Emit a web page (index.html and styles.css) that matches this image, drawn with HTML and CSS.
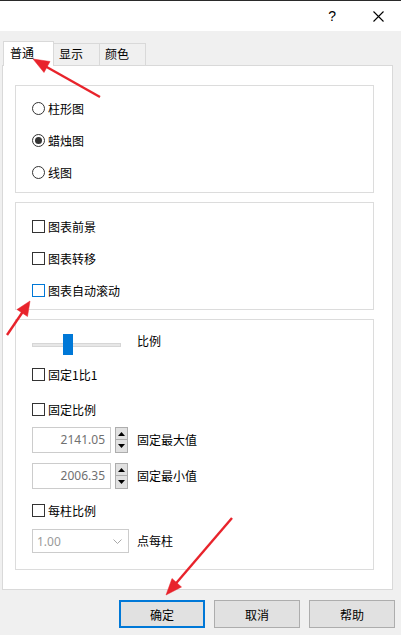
FILE: index.html
```html
<!DOCTYPE html>
<html lang="zh-CN">
<head>
<meta charset="utf-8">
<link rel="stylesheet" href="styles.css">
</head>
<body>
<div class="topline"></div>
<div class="titlebar">
  <span class="help">?</span>
  <svg class="close" width="11" height="11" viewBox="0 0 11 11"><path d="M0.5 0.5L10.5 10.5M10.5 0.5L0.5 10.5" stroke="#000" stroke-width="1.1" fill="none"/></svg>
</div>
<div class="content">
  <div class="tabs">
    <div class="tab active">普通</div>
    <div class="tab">显示</div>
    <div class="tab">颜色</div>
  </div>
  <div class="panel">
    <div class="group g1">
      <div class="row"><span class="radio"></span><span>柱形图</span></div>
      <div class="row"><span class="radio checked"></span><span>蜡烛图</span></div>
      <div class="row"><span class="radio"></span><span>线图</span></div>
    </div>
    <div class="group g2">
      <div class="row"><span class="check"></span><span>图表前景</span></div>
      <div class="row"><span class="check"></span><span>图表转移</span></div>
      <div class="row"><span class="check hover"></span><span>图表自动滚动</span></div>
    </div>
    <div class="group g3">
      <div class="line slider-line">
        <div class="ctrl">
          <div class="slider"><div class="track"></div><div class="thumb"></div></div>
        </div>
        <span class="lbl top">比例</span>
      </div>
      <div class="row r-fix11"><span class="check"></span><span>固定1比1</span></div>
      <div class="row r-fixratio"><span class="check"></span><span>固定比例</span></div>
      <div class="line spin-line s1">
        <div class="ctrl">
          <div class="spin">
            <div class="input">2141.05</div>
            <div class="spinbtns">
              <div class="sb"><svg width="7" height="4" viewBox="0 0 7 4"><path d="M3.5 0L7 4H0Z" fill="#000"/></svg></div>
              <div class="sb"><svg width="7" height="4" viewBox="0 0 7 4"><path d="M0 0H7L3.5 4Z" fill="#000"/></svg></div>
            </div>
          </div>
        </div>
        <span class="lbl">固定最大值</span>
      </div>
      <div class="line spin-line s2">
        <div class="ctrl">
          <div class="spin">
            <div class="input">2006.35</div>
            <div class="spinbtns">
              <div class="sb"><svg width="7" height="4" viewBox="0 0 7 4"><path d="M3.5 0L7 4H0Z" fill="#000"/></svg></div>
              <div class="sb"><svg width="7" height="4" viewBox="0 0 7 4"><path d="M0 0H7L3.5 4Z" fill="#000"/></svg></div>
            </div>
          </div>
        </div>
        <span class="lbl">固定最小值</span>
      </div>
      <div class="row r-perbar"><span class="check"></span><span>每柱比例</span></div>
      <div class="line combo-line">
        <div class="ctrl">
          <div class="combo"><span>1.00</span><svg width="9" height="5" viewBox="0 0 9 5"><path d="M0.5 0.5L4.5 4.5L8.5 0.5" stroke="#a8a8a8" fill="none" stroke-width="1"/></svg></div>
        </div>
        <span class="lbl">点每柱</span>
      </div>
    </div>
  </div>
  <div class="buttons">
    <div class="btn default">确定</div>
    <div class="btn">取消</div>
    <div class="btn">帮助</div>
  </div>
</div>
<svg class="arrows" width="401" height="635" viewBox="0 0 401 635">
  <g fill="#e8232b" stroke="#e8232b">
    <line x1="100" y1="97" x2="44" y2="65.5" stroke-width="2.4"/>
    <polygon points="33,59 50,61.5 44,72.5" stroke-width="0.5"/>
    <line x1="7" y1="335" x2="24" y2="310" stroke-width="2.4"/>
    <polygon points="30,301 27.5,316.5 17,309.5" stroke-width="0.5"/>
    <line x1="232" y1="518" x2="175" y2="584.5" stroke-width="2.4"/>
    <polygon points="166,595 181.5,587 172,578.5" stroke-width="0.5"/>
  </g>
</svg>
</body>
</html>
```
FILE: styles.css
```css
* { box-sizing: border-box; }
html, body { margin: 0; padding: 0; }
body {
  width: 401px;
  height: 635px;
  background: #f0f0f0;
  font-family: "Noto Sans CJK SC", "Microsoft YaHei", sans-serif;
  font-size: 12px;
  color: #000;
  position: relative;
  overflow: hidden;
}
.topline { height: 1px; background: #2a2a2a; }
.titlebar {
  height: 30px;
  background: #fff;
  display: flex;
  align-items: center;
  justify-content: flex-end;
  padding-right: 17px;
}
.help {
  font-family: "Liberation Sans", sans-serif;
  font-size: 14px;
  line-height: 16px;
  margin-right: 37px;
  margin-top: -1px;
}
.close { display: block; }
.content { padding: 10px 0 0 2px; }
.tabs {
  display: flex;
  height: 24px;
  padding-left: 1px;
  align-items: flex-start;
}
.tab {
  height: 22px;
  margin-top: 2px;
  margin-left: -1px;
  width: 47px;
  border: 1px solid #d9d9d9;
  border-bottom: none;
  background: #f0f0f0;
  padding-left: 5px;
  line-height: 20px;
}
.tab.active {
  margin-left: 0;
  margin-top: 0;
  width: 51px;
  height: 25px;
  background: #fff;
  position: relative;
  z-index: 2;
  line-height: 21px;
  padding-left: 6px;
}
.panel {
  width: 391px;
  height: 525px;
  border: 1px solid #d9d9d9;
  background: #fff;
  padding: 19px 0 0 12px;
  position: relative;
  z-index: 1;
}
.group {
  width: 359px;
  border: 1px solid #dcdcdc;
  padding-left: 16px;
}
.g1 { height: 108px; padding-top: 6px; margin-bottom: 9px; }
.g2 { height: 108px; padding-top: 7px; margin-bottom: 9px; }
.g3 { height: 251px; padding-top: 14px; }
.row {
  display: flex;
  align-items: center;
  height: 32px;
}
.radio {
  width: 13px; height: 13px;
  border: 1px solid #333;
  border-radius: 50%;
  margin-right: 3px;
  position: relative;
  flex: none;
}
.radio.checked::after {
  content: "";
  position: absolute;
  left: 2px; top: 2px;
  width: 7px; height: 7px;
  border-radius: 50%;
  background: #333;
}
.check {
  width: 13px; height: 13px;
  border: 1px solid #333;
  margin-right: 3px;
  flex: none;
}
.check.hover { border-color: #0078d7; }
.line { display: flex; align-items: center; }
.ctrl { width: 105px; flex: none; }
.lbl { line-height: 16px; }
.slider-line { height: 21px; align-items: flex-start; }
.lbl.top { margin-top: -1px; }
.slider { position: relative; width: 89px; height: 21px; }
.track {
  position: absolute;
  left: 0; top: 9px;
  width: 89px; height: 4px;
  background: #e7e7e7;
  border: 1px solid #d6d6d6;
}
.thumb {
  position: absolute;
  left: 31px; top: 0;
  width: 10px; height: 21px;
  background: #0078d7;
}
.row.r-fix11 { height: 20px; margin-top: 9px; }
.row.r-fixratio { height: 20px; margin-top: 15px; }
.spin-line { height: 26px; }
.s1 { margin-top: 8px; }
.s2 { margin-top: 10px; }
.spin { display: flex; gap: 4px; }
.input {
  width: 79px; height: 26px;
  border: 1px solid #cccccc;
  color: #707070;
  text-align: right;
  padding-right: 5px;
  line-height: 23px;
  font-family: "Noto Sans", "Noto Sans CJK SC", sans-serif;
  font-size: 12px;
}
.spinbtns { display: flex; flex-direction: column; width: 13px; height: 26px; }
.sb {
  height: 13px;
  background: #e1e1e1;
  border: 1px solid #adadad;
  display: flex; align-items: center; justify-content: center;
}
.sb + .sb { border-top: none; height: 13px; }
.sb svg { display: block; }
.row.r-perbar { height: 20px; margin-top: 11px; }
.combo-line { height: 24px; margin-top: 9px; }
.combo {
  width: 97px; height: 24px;
  border: 1px solid #cccccc;
  display: flex; align-items: center; justify-content: space-between;
  padding: 0 6px 0 4px;
  color: #9a9a9a;
  font-family: "Noto Sans", "Noto Sans CJK SC", sans-serif;
}
.combo svg { display: block; margin-top: 1px; }
.buttons {
  display: flex;
  justify-content: flex-end;
  gap: 9px;
  margin-top: 10px;
  padding-right: 6px;
}
.btn {
  width: 86px; height: 28px;
  background: #e1e1e1;
  border: 1px solid #adadad;
  display: flex; align-items: center; justify-content: center;
}
.btn.default { border: 2px solid #0078d7; }
.arrows { position: absolute; left: 0; top: 0; pointer-events: none; z-index: 5; }
```
